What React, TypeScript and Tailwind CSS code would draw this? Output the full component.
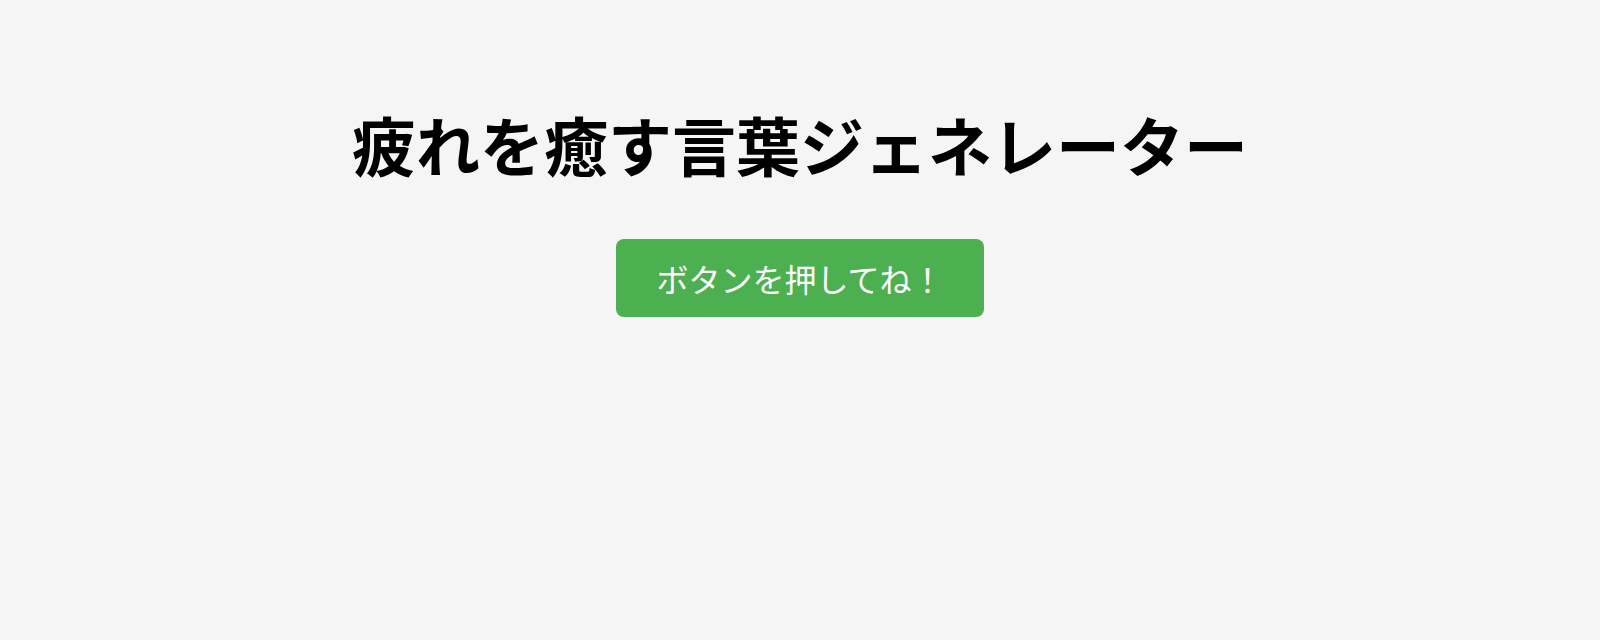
export default function App() {
  return (
    <div className="min-h-[640px] w-full bg-[#f5f5f5] font-['Noto_Sans_CJK_JP','Noto_Sans',sans-serif]">
      <div className="flex flex-col items-center pt-[95px]">
        <h1 className="text-[64px] font-bold leading-normal text-black">
          疲れを癒す言葉ジェネレーター
        </h1>
        <button
          type="button"
          className="mt-[48px] rounded-[8px] bg-[#4caf50] px-[40px] pt-[15px] pb-[15px] text-[32px] leading-normal text-white"
        >
          ボタンを押してね！
        </button>
      </div>
    </div>
  );
}
